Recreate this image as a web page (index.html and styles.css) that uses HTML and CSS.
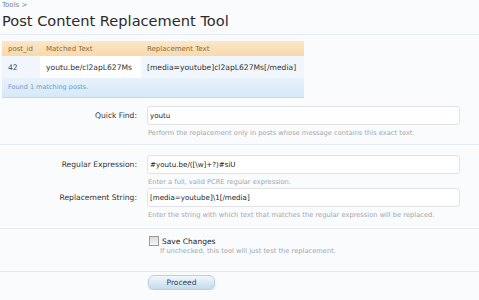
FILE: index.html
```html
<!DOCTYPE html>
<html>
<head>
  <title>Post Content Replacement Tool</title>
  <link rel="stylesheet" href="styles.css">
</head>
<body>
  <div class="breadcrumb">Tools &gt;</div>
  <h1 class="title">Post Content Replacement Tool</h1>

  <div class="results">
    <table class="dataTable">
      <tr class="headRow">
        <th class="colId">post_id</th>
        <th class="colMatch">Matched Text</th>
        <th class="colRepl">Replacement Text</th>
      </tr>
      <tr class="dataRow">
        <td>42</td>
        <td class="matched">youtu.be/cl2apL627Ms</td>
        <td>[media=youtube]cl2apL627Ms[/media]</td>
      </tr>
    </table>
    <div class="tableFooter">Found 1 matching posts.</div>
  </div>

  <form class="toolForm">
    <div class="formUnit">
      <label class="ctrlLabel">Quick Find:</label>
      <div class="ctrlUnit">
        <input class="textCtrl" type="text" value="youtu">
        <p class="explain">Perform the replacement only in posts whose message contains this exact text.</p>
      </div>
    </div>

    <div class="formGroup regexGroup">
      <div class="formUnit">
        <label class="ctrlLabel">Regular Expression:</label>
        <div class="ctrlUnit">
          <input class="textCtrl" type="text" value="#youtu.be/([\w]+?)#siU">
          <p class="explain">Enter a full, valid PCRE regular expression.</p>
        </div>
      </div>
      <div class="formUnit">
        <label class="ctrlLabel">Replacement String:</label>
        <div class="ctrlUnit">
          <input class="textCtrl" type="text" value="[media=youtube]\1[/media]">
          <p class="explain">Enter the string with which text that matches the regular expression will be replaced.</p>
        </div>
      </div>
    </div>

    <div class="formGroup checkGroup">
      <div class="formUnit">
        <span class="ctrlLabel"></span>
        <div class="ctrlUnit">
          <label class="checkLine"><span class="checkBox"></span>Save Changes</label>
          <p class="explain checkExplain">If unchecked, this tool will just test the replacement.</p>
        </div>
      </div>
    </div>

    <div class="submitUnit">
      <span class="ctrlLabel"></span>
      <button type="button" class="button">Proceed</button>
    </div>
  </form>
</body>
</html>
```
FILE: styles.css
```css
body {
  margin: 0;
  background-color: #fafbfd;
  font-family: "DejaVu Sans", sans-serif;
  color: #333;
}

.breadcrumb {
  font-size: 7px;
  color: #6e84a0;
  padding: 1px 0 0 2px;
  height: 9px;
}

.title {
  font-family: "DejaVu Sans", sans-serif;
  font-weight: normal;
  font-size: 14.6px;
  color: #2b2b2b;
  margin: 0;
  padding: 2px 2px 5px;
  border-bottom: 1px solid #e6eef5;
}

.results {
  width: 302px;
  margin: 6px 0 0 2px;
  border-bottom: 1px solid #c8dbea;
}

.dataTable {
  width: 100%;
  border-collapse: collapse;
  font-size: 7px;
}

.headRow th {
  background: linear-gradient(#fbe6c8, #f8d9ab);
  color: #8a6a3b;
  font-weight: normal;
  text-align: left;
  height: 15px;
  padding: 0 6px;
}

.dataRow td {
  background-color: #f0f6fb;
  font-size: 7.6px;
  color: #333;
  height: 22px;
  padding: 0 6px;
}

.dataRow td:first-child {
  color: #2a4e75;
}

.dataRow td.matched {
  background-color: #fff;
}

.colId {
  width: 26px;
}

.colMatch {
  width: 89px;
}

.tableFooter {
  background: linear-gradient(#e8f2fb, #d6e8f7);
  color: #6f9ccb;
  font-size: 6.5px;
  height: 19px;
  line-height: 19px;
  padding-left: 6px;
}

.toolForm {
  margin-top: 8px;
}

.formUnit {
  display: flex;
  align-items: flex-start;
}

.ctrlLabel {
  width: 147px;
  flex-shrink: 0;
  text-align: right;
  font-size: 7.6px;
  color: #333;
  padding-top: 5px;
  padding-right: 10px;
  box-sizing: border-box;
}

.ctrlUnit {
  flex: 1;
  padding-right: 19px;
}

.textCtrl {
  display: block;
  width: 100%;
  box-sizing: border-box;
  height: 19px;
  border: 1px solid #e1e3e6;
  border-radius: 3px;
  background-color: #fff;
  font-family: "DejaVu Sans", sans-serif;
  font-size: 7.1px;
  color: #222;
  padding: 0 2px;
}

.explain {
  margin: 3px 0 0 1px;
  font-size: 6.7px;
  color: #a2a7ad;
  line-height: 10px;
}

.formGroup {
  border-top: 1px solid #e5edf3;
  margin-top: 9px;
  padding-top: 8px;
}

.regexGroup {
  margin-top: 6px;
  padding-top: 10px;
}

.formGroup .formUnit + .formUnit {
  margin-top: 1px;
}

.checkGroup {
  margin-top: 8px;
  padding-top: 7px;
  padding-bottom: 15px;
  border-bottom: 1px solid #dcebf1;
}

.checkLine {
  display: flex;
  align-items: center;
  font-size: 7.5px;
  color: #222;
  padding-left: 2px;
}

.checkBox {
  width: 8px;
  height: 8px;
  border: 1px solid #9a9a9a;
  background: linear-gradient(#dcdcdc, #f6f6f6);
  margin-right: 3px;
}

.checkExplain {
  margin: 0 0 0 13px;
}

.submitUnit {
  display: flex;
  padding-top: 3px;
}

.submitUnit .ctrlLabel {
  padding: 0;
  width: 148px;
}

.button {
  width: 67px;
  height: 15px;
  border: 1px solid #b9d1e4;
  border-radius: 6px;
  background: linear-gradient(#f2f8fc, #c3daed);
  font-family: "DejaVu Sans", sans-serif;
  font-size: 7.5px;
  color: #2a3d52;
  padding: 0;
  box-shadow: 0 1px 2px rgba(0, 0, 0, 0.15);
}
```
